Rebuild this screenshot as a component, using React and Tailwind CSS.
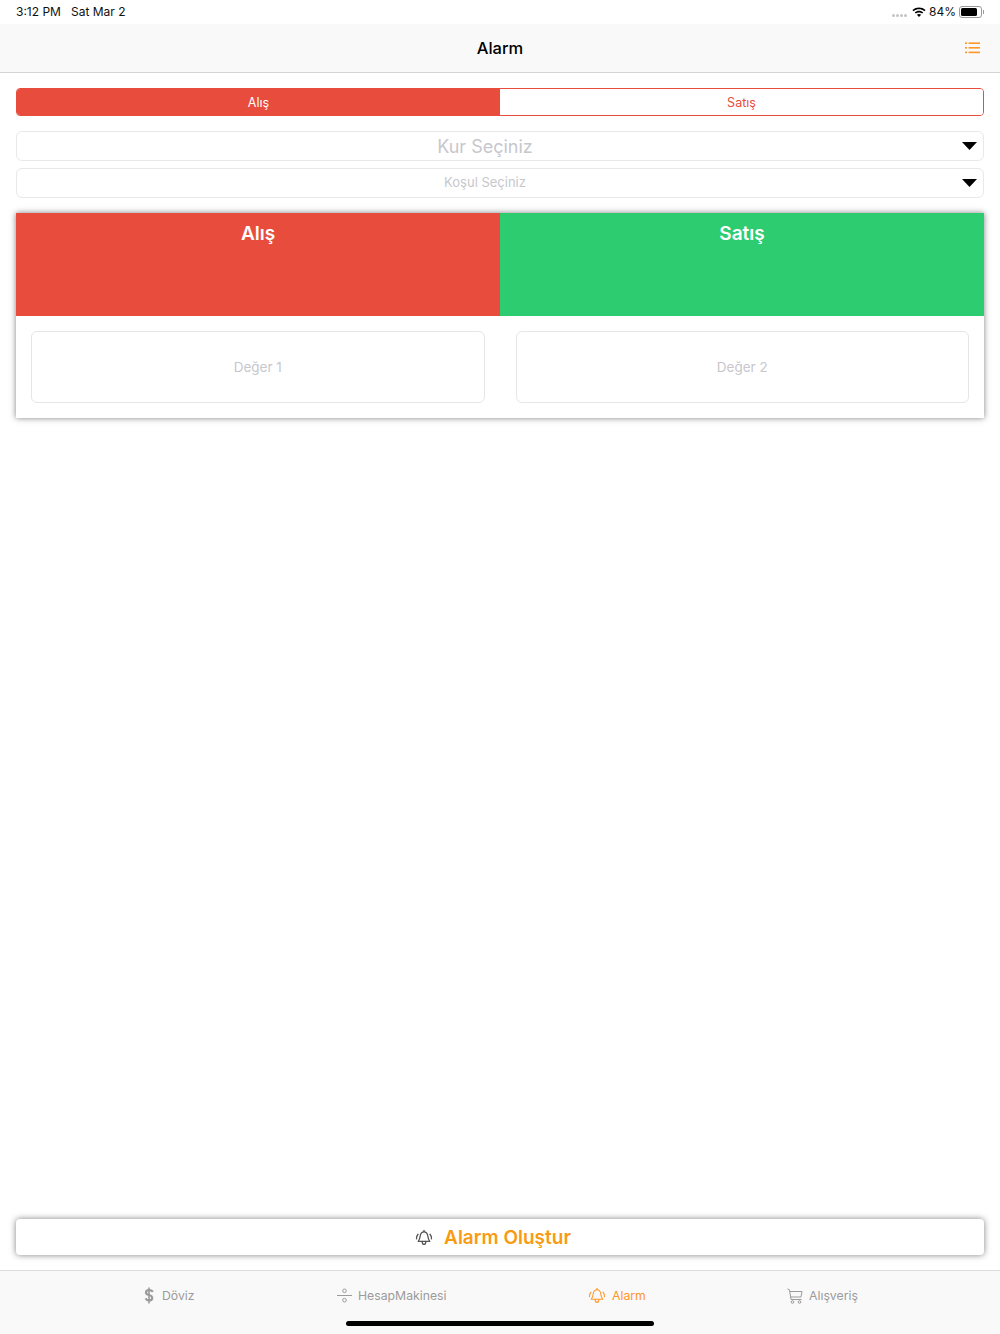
const font = { fontFamily: 'Inter, "Noto Sans", sans-serif' };

function Picker({ label, size }) {
  return (
    <div className="relative h-[30px] rounded-md border border-[#e8e8e8] bg-white flex items-center justify-center pr-[30px]">
      <span className={`${size} text-[#c7c7cd]`}>{label}</span>
      <svg className="absolute right-[6px] top-[10px]" width="15" height="8" viewBox="0 0 15 8">
        <path d="M0 0H15L7.5 8Z" fill="#000" />
      </svg>
    </div>
  );
}

function ValueBox({ label }) {
  return (
    <div className="flex-1 h-[72px] rounded-md border border-[#e6e6e6] flex items-center justify-center text-[13.5px] text-[#c7c7cd]">
      {label}
    </div>
  );
}

function BellIcon({ color, size = 18, weight = 1.1 }) {
  return (
    <svg width={size} height={size} viewBox="0 0 18 18" fill="none" stroke={color} strokeWidth={weight} strokeLinecap="round" strokeLinejoin="round">
      <path d="M9 2.800c-2.300 0-3.500 1.800-3.800 4.200-.2 2-.8 3.500-2 5.300h11.600c-1.200-1.800-1.800-3.300-2-5.300C12.500 4.600 11.300 2.800 9 2.800Z" />
      <path d="M9 2.800V1.400" />
      <path d="M7.200 12.400c0 1.900.7 3 1.800 3s1.800-1.100 1.800-3" />
      <path d="M3 5.200C1.800 6.500 1.300 8 1.500 9.800" />
      <path d="M15 5.200c1.200 1.300 1.700 2.800 1.500 4.600" />
    </svg>
  );
}

function TabItem({ icon, label, active, className }) {
  return (
    <div className={`flex items-center gap-[6px] text-[12.25px] ${active ? 'text-[#ff9628]' : 'text-[#9b9b9b]'} ${className}`}>
      {icon}
      <span className="pt-[1px]">{label}</span>
    </div>
  );
}

export default function App() {
  return (
    <div className="w-[1000px] h-[1334px] bg-white flex flex-col overflow-hidden relative" style={font}>
      {/* status bar */}
      <div className="h-6 px-4 flex items-center justify-between text-[12px] text-[#111]">
        <div className="flex gap-[10px]">
          <span>3:12 PM</span>
          <span>Sat Mar 2</span>
        </div>
        <div className="flex items-center">
          <div className="flex gap-[1px] mr-[5px] mt-[6px]">
            <span className="w-[3px] h-[3px] rounded-full bg-[#c4c4c4]" />
            <span className="w-[3px] h-[3px] rounded-full bg-[#c4c4c4]" />
            <span className="w-[3px] h-[3px] rounded-full bg-[#c4c4c4]" />
            <span className="w-[3px] h-[3px] rounded-full bg-[#c4c4c4]" />
          </div>
          <svg width="14" height="10" viewBox="0 0 14 10" className="mr-[3px]">
            <path d="M7 10 4.900 7.700C6.100 6.700 7.900 6.700 9.100 7.700Z" fill="#000" />
            <path d="M3.900 6.600 2.700 5.300C5.200 3.200 8.800 3.200 11.300 5.300L10.100 6.600C8.300 5.100 5.700 5.100 3.900 6.600Z" fill="#000" />
            <path d="M1.700 4.300 .4 3C4.200-.3 9.800-.3 13.600 3L12.300 4.300C9.200 1.700 4.800 1.700 1.700 4.300Z" fill="#000" />
          </svg>
          <span className="mr-[3px]">84%</span>
          <div className="w-[23px] h-[12px] rounded-[3px] border border-[#9a9a9a] p-[1px]">
            <div className="h-full w-[84%] rounded-[1.500px] bg-black" />
          </div>
          <div className="w-[1px] h-[4px] bg-[#9a9a9a] ml-[1px]" />
        </div>
      </div>

      {/* nav bar */}
      <div className="relative h-[49px] bg-[#f9f9f9] border-b border-[#d4d4d4] flex items-center justify-center pt-[1px]">
        <span className="text-[16.5px] font-medium text-black">Alarm</span>
        <svg className="absolute right-[20px] top-[18px]" width="15" height="12" viewBox="0 0 15 12" fill="#ff9628">
          <rect x="0" y="0.400" width="2" height="1.600" />
          <rect x="3.500" y="0.400" width="11.500" height="1.600" />
          <rect x="0" y="5" width="2" height="1.600" />
          <rect x="3.500" y="5" width="11.500" height="1.600" />
          <rect x="0" y="9.600" width="2" height="1.600" />
          <rect x="3.500" y="9.600" width="11.500" height="1.600" />
        </svg>
      </div>

      <div className="px-4 pt-[15px] flex-1 flex flex-col">
        {/* segmented control */}
        <div className="grid grid-cols-2 h-[28px] rounded-[4px] border border-[#e74c3c] overflow-hidden text-[12.5px]">
          <div className="bg-[#e74c3c] text-white flex items-center justify-center pt-[2px]">Alış</div>
          <div className="bg-white text-[#e74c3c] flex items-center justify-center pt-[2px]">Satış</div>
        </div>

        <div className="mt-[15px] flex flex-col gap-[7px]">
          <Picker label="Kur Seçiniz" size="text-[18px]" />
          <Picker label="Koşul Seçiniz" size="text-[13px]" />
        </div>

        {/* rate card */}
        <div className="mt-[15px] bg-white shadow-[0_0_6px_rgba(0,0,0,0.5)]">
          <div className="grid grid-cols-2 h-[103px] text-white text-[19px] font-semibold">
            <div className="bg-[#e74c3c] text-center pt-[7px]">Alış</div>
            <div className="bg-[#2ecc71] text-center pt-[7px]">Satış</div>
          </div>
          <div className="flex gap-[31px] p-[15px]">
            <ValueBox label="Değer 1" />
            <ValueBox label="Değer 2" />
          </div>
        </div>

        {/* create button */}
        <div className="mt-auto mb-[15px] h-[36px] rounded-[4px] bg-white shadow-[0_0_6px_rgba(0,0,0,0.5)] flex items-center justify-center gap-[11px] pr-[14px] pt-[2px]">
          <BellIcon color="#555" weight={1.3} />
          <span className="text-[19px] font-semibold text-[#f89b12]">Alarm Oluştur</span>
        </div>
      </div>

      {/* tab bar */}
      <div className="relative h-[64px] bg-[#f9f9f9] border-t border-[#dcdcdc] flex items-start pt-[15px]">
        <TabItem
          className="absolute left-[144px]"
          label="Döviz"
          icon={
            <svg width="12" height="17" viewBox="0 0 12 17" fill="none" stroke="#9b9b9b" strokeWidth="2.2">
              <path d="M8.600 5C8.200 3.600 7 3.100 5 3.100c-1.700 0-3 .8-3 2.400 0 3.400 6.200 1.700 6.200 5.400 0 1.700-1.400 2.500-3.200 2.500-1.600 0-2.800-.6-3.400-2" />
              <path d="M5 .5v16" strokeWidth="1.600" />
            </svg>
          }
        />
        <TabItem
          className="absolute left-[337px]"
          label="HesapMakinesi"
          icon={
            <svg width="15" height="15" viewBox="0 0 15 15" fill="none" stroke="#9b9b9b" strokeWidth="1">
              <circle cx="7.500" cy="2.800" r="1.800" />
              <path d="M0 7.500h15" />
              <circle cx="7.500" cy="12.200" r="1.800" />
            </svg>
          }
        />
        <TabItem className="absolute left-[588px] gap-[5px]" label="Alarm" active icon={<BellIcon color="#ff9628" />} />
        <TabItem
          className="absolute left-[787px]"
          label="Alışveriş"
          icon={
            <svg width="16" height="16" viewBox="0 0 16 16" fill="none" stroke="#9b9b9b" strokeWidth="1" strokeLinejoin="round">
              <path d="M.5 1 2.500 1.800 4 11.500H14.500" />
              <path d="M2.800 3.500H15L14 9H3.700" />
              <circle cx="5.500" cy="14" r="1.300" />
              <circle cx="12.500" cy="14" r="1.300" />
            </svg>
          }
        />
        {/* home indicator */}
        <div className="absolute left-[346px] bottom-[8px] w-[308px] h-[5px] rounded-full bg-black" />
      </div>
    </div>
  );
}
